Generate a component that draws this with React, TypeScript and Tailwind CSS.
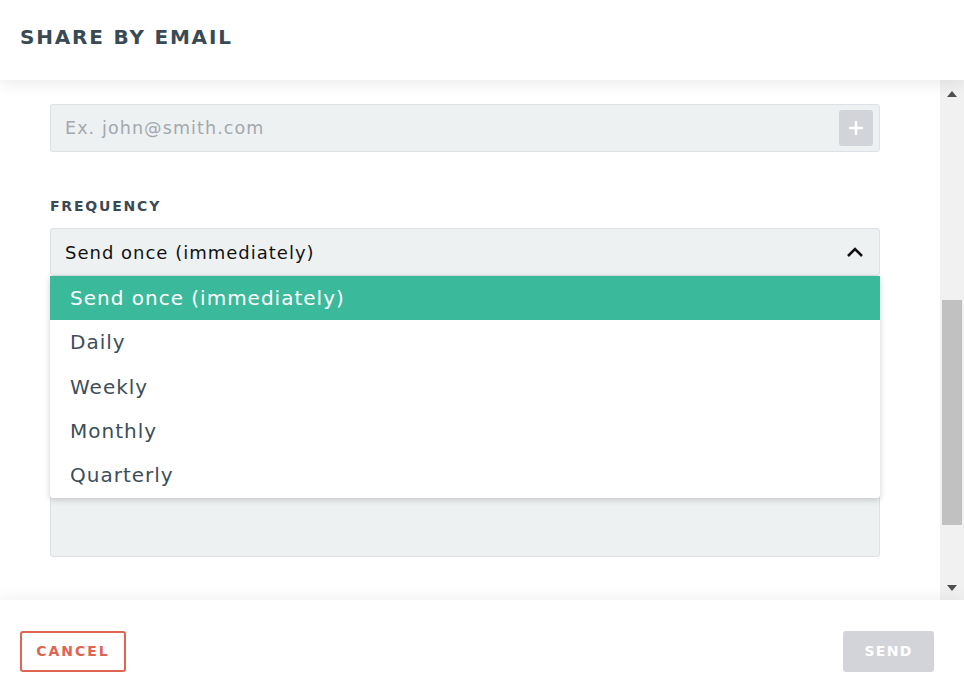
import { useState } from 'react'

const options = ['Send once (immediately)', 'Daily', 'Weekly', 'Monthly', 'Quarterly']

const font = { fontFamily: '"DejaVu Sans", "Open Sans", sans-serif' }

export default function App() {
  const [selected] = useState(0)

  return (
    <div className="w-[964px] h-[688px] bg-white flex flex-col overflow-hidden" style={font}>
      {/* Header */}
      <div className="relative z-20 h-[80px] shrink-0 bg-white flex items-center px-5 pb-[6px] shadow-[0_4px_14px_rgba(0,0,0,0.08)]">
        <h1 className="text-[20px] font-bold tracking-[1.8px] text-[#3a4a55] uppercase">Share by email</h1>
      </div>

      {/* Scroll area */}
      <div className="relative z-0 h-[520px] flex overflow-hidden">
        <div className="flex-1 overflow-hidden">
          <div className="pl-[50px] pr-[60px] -mt-[16px]">
            <label className="block h-[24px] text-[14px] font-bold tracking-[1.8px] text-[#3a4a55]">TO</label>
            <div className="mt-[16px] h-[48px] flex items-center justify-between pl-[14px] pr-[6px] bg-[#eef1f2] border border-[#dde1e4] rounded-[3px]">
              <span className="text-[17.5px] tracking-[1.1px] text-[#a2a8ad]">Ex. john@smith.com</span>
              <div className="w-[34px] h-[36px] rounded-[3px] bg-[#d3d4d9] flex items-center justify-center">
                <svg width="16" height="16" viewBox="0 0 16 16">
                  <path d="M8 1v14M1 8h14" stroke="#fff" strokeWidth="2.4" />
                </svg>
              </div>
            </div>

            <label className="block mt-[44px] text-[14px] font-bold tracking-[1.8px] text-[#3a4a55]">FREQUENCY</label>
            <div className="relative mt-[11px]">
              <div className="h-[48px] flex items-center justify-between pl-[14px] pr-[15px] bg-[#eef1f2] border border-[#dde1e4] rounded-[3px]">
                <span className="text-[18px] tracking-[1px] text-[#111]">{options[selected]}</span>
                <svg width="18" height="12" viewBox="0 0 18 12">
                  <path d="M2 10l7-7 7 7" fill="none" stroke="#111" strokeWidth="2.6" />
                </svg>
              </div>

              {/* Dropdown menu */}
              <ul className="absolute z-10 left-0 right-0 top-[48px] bg-white shadow-[0_2px_6px_rgba(0,0,0,0.18)] rounded-b-[3px]">
                {options.map((o, i) => (
                  <li
                    key={o}
                    className={
                      i === selected
                        ? 'h-[44px] flex items-center px-5 text-[20px] tracking-[1px] bg-[#3aba9a] text-white'
                        : 'h-[44.4px] flex items-center px-5 text-[20px] tracking-[1px] text-[#3d4e59]'
                    }
                  >
                    {o}
                  </li>
                ))}
              </ul>
            </div>

            {/* Message box (mostly hidden under the open menu) */}
            <div className="mt-[46px] h-[235px] bg-[#eef1f2] border border-[#dde1e4] rounded-[3px]" />
          </div>
        </div>

        {/* Scrollbar */}
        <div className="w-[24px] shrink-0 bg-[#f1f1f1] flex flex-col items-center">
          <div className="h-[24px] w-full flex items-center justify-center pt-[4px]">
            <svg width="10" height="6" viewBox="0 0 10 6"><path d="M0 6L5 0l5 6z" fill="#505050" /></svg>
          </div>
          <div className="flex-1 w-full px-[2px]">
            <div className="mt-[196px] h-[225px] bg-[#c1c1c1]" />
          </div>
          <div className="h-[24px] w-full flex items-center justify-center">
            <svg width="10" height="6" viewBox="0 0 10 6"><path d="M0 0h10L5 6z" fill="#505050" /></svg>
          </div>
        </div>
      </div>

      {/* Footer */}
      <div className="relative z-20 flex-1 bg-white flex items-center justify-between px-5 pt-[15px] shadow-[0_-4px_14px_rgba(0,0,0,0.05)]">
        <button className="w-[106px] h-[41px] border-2 border-[#e06452] rounded-[3px] text-[14px] font-bold tracking-[2px] text-[#e06452]">
          CANCEL
        </button>
        <button className="mr-[10px] w-[91px] h-[41px] bg-[#d3d4d9] rounded-[3px] text-[14px] font-bold tracking-[1.3px] text-white">
          SEND
        </button>
      </div>
    </div>
  )
}
